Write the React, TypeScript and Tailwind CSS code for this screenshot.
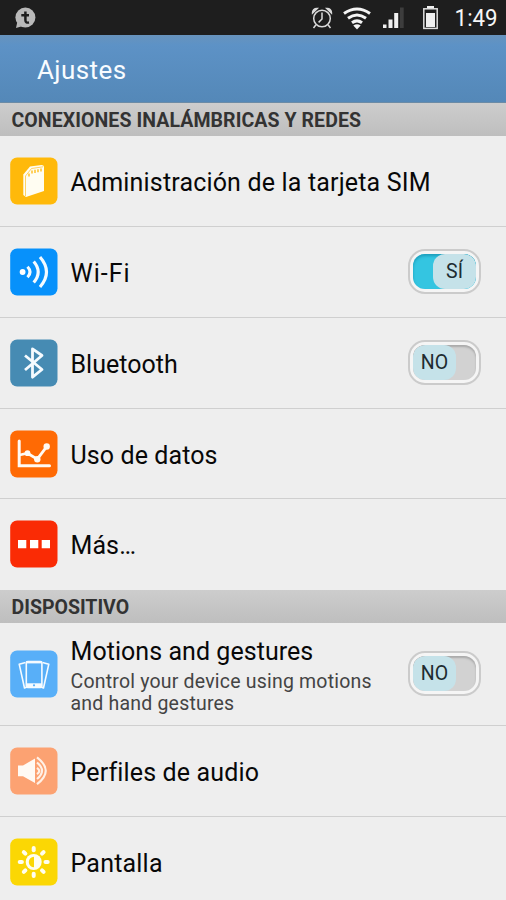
import type { ReactNode } from 'react';

function Tile({ color, children }: { color: string; children: ReactNode }) {
  return (
    <svg className={`block h-12 w-12 shrink-0 ${color}`} viewBox="0 0 48 48" fill="none">
      <rect x="0.2" y="0.4" width="47.3" height="47.2" rx="7" fill="currentColor" />
      {children}
    </svg>
  );
}

function Toggle({ on = false }: { on?: boolean }) {
  return (
    <div className="mb-[2px] h-[45px] w-[73px] shrink-0 rounded-[17px] border-2 border-[#cbcbcb] bg-[#f5f5f5] p-[3px]">
      <div
        className={`flex h-full w-full overflow-hidden rounded-[12px] ${
          on
            ? 'justify-end bg-[#34c5e1] shadow-[inset_0_2px_3px_#1c9dbb]'
            : 'justify-start bg-[#d2d2d2] shadow-[inset_0_2px_2px_#aaaaaa]'
        }`}
      >
        <div className="flex h-full w-[43px] items-center justify-center rounded-[12px] bg-[#c5e2e9] pt-[2px] text-[19.5px] leading-none text-[#202c30]">
          {on ? 'SÍ' : 'NO'}
        </div>
      </div>
    </div>
  );
}

function Section({ children }: { children: ReactNode }) {
  return (
    <h2 className="flex h-[33px] shrink-0 items-center bg-linear-to-b from-[#cdcdcd] to-[#bebebe] pt-[2px] pl-[11.5px] text-[19.5px] font-bold text-[#333333]">
      {children}
    </h2>
  );
}

function Row({
  icon,
  label,
  height = 'h-[91px] border-b',
  toggle,
}: {
  icon: ReactNode;
  label: ReactNode;
  height?: string;
  toggle?: ReactNode;
}) {
  return (
    <div className={`flex shrink-0 items-center border-[#cfcfcf] pl-[10px] pr-[25px] ${height}`}>
      {icon}
      <div className="min-w-0 flex-1 pt-[4px] pl-[12.5px] whitespace-nowrap">{label}</div>
      {toggle}
    </div>
  );
}

function Title({ className = 'tracking-[0.1px]', children }: { className?: string; children: ReactNode }) {
  return <div className={`text-[25px] leading-[30px] text-[#080808] ${className}`}>{children}</div>;
}

const rays = [0, 45, 90, 135, 180, 225, 270, 315];

export default function App() {
  return (
    <div className="flex h-[900px] w-[506px] flex-col overflow-hidden bg-[#eeeeee] font-[Roboto,sans-serif]">
      <div className="flex h-[35px] shrink-0 items-center bg-[#1e1e1e]">
        <svg className="h-[35px] w-[506px]" viewBox="0 0 506 35" fill="none">
          <path d="M16 28 L17.3 22 A10 10 0 0 0 22 26.3 Z" fill="#b9b9b9" />
          <circle cx="25.4" cy="17.5" r="10" fill="#b9b9b9" />
          <path d="M25.4 11.5 V20 Q25.4 23.2 29 22.5 M21.3 15.2 H29" stroke="#1e1e1e" strokeWidth="2.5" />
          <g stroke="#dadada" strokeWidth="1.5">
            <circle cx="322" cy="18.5" r="8.3" />
            <path d="M322 12.5 V19 L318.6 22.4 M315.8 25 L313.5 28 M328.2 25 L330.5 28" />
            <path d="M312.7 12.7 A4 4 0 0 1 317 8.6 Z M331.3 12.7 A4 4 0 0 0 327 8.6 Z" fill="#dadada" strokeWidth="1.8" />
          </g>
          <g stroke="#f4f4f4" strokeWidth="3">
            <path d="M344 13.5 Q357 4.5 370 13.5" />
            <path d="M348 18.2 Q357 11.7 366 18.2" />
            <path d="M352 22.8 Q357 19 362 22.8" />
          </g>
          <path d="M353.3 25.6 Q357 23 360.7 25.6 L357 29.6 Z" fill="#f4f4f4" />
          <g fill="#f0f0f0">
            <rect x="383" y="24.5" width="3.5" height="3.5" />
            <rect x="388.5" y="19.5" width="4" height="8.5" />
            <rect x="394.2" y="13" width="4" height="15" />
            <rect x="400" y="7.5" width="3.7" height="20.5" fill="#3d3d3d" />
            <rect x="427" y="6" width="7" height="3" />
            <rect x="426" y="13" width="9" height="14" />
          </g>
          <rect x="423.8" y="8.8" width="13.4" height="19.6" stroke="#dddddd" strokeWidth="1.5" />
          <text x="454.6" y="26" fill="#f6f6f6" className="text-[24px]" textLength="43" lengthAdjust="spacingAndGlyphs">1:49</text>
        </svg>
      </div>
      <header className="flex h-[68px] shrink-0 items-center border-b border-[#6b8ba6] bg-linear-to-b from-[#6793bd] via-[#5d92c6] via-15% to-[#5488b8] pl-[37px] pt-[4px] text-[26px] tracking-[0.4px] text-[#f8fcff]">
        Ajustes
      </header>

      <Section><span className="tracking-[0.08px]">CONEXIONES INALÁMBRICAS Y REDES</span></Section>
      <Row
        icon={
          <Tile color="text-[#ffb90a]">
            <path d="M13.3 17.5 L20 9.5 L31.5 8 Q34 8 34 10 V34 L16 40 L13.3 38 Z" fill="#fffdf2" />
            <path d="M15.5 39 V19 L21.5 11.5 L33 9.8" stroke="#ffc83f" strokeWidth="0.8" />
            <path d="M19 19.5 V16.5 M22 16.5 V13.5 M25 16 V12.8 M28 15.3 V12.2 M31 14.5 V11.5" stroke="#ffb90a" strokeWidth="1.3" />
          </Tile>
        }
        label={<Title className="tracking-[0.17px]">Administración de la tarjeta SIM</Title>}
      />
      <Row
        icon={
          <Tile color="text-[#0791fb]">
            <circle cx="12.6" cy="24" r="2.9" fill="#fff" />
            <path d="M17.5 18.8 Q22.5 24 17.5 29.2 M23.7 13.5 Q32.7 24 23.7 34.5 M30 9 Q43 24 30 39" stroke="#f4fbff" strokeWidth="3.1" />
          </Tile>
        }
        label={<Title className="tracking-[1px]">Wi-Fi</Title>}
        toggle={<Toggle on />}
      />
      <Row
        icon={
          <Tile color="text-[#468bb3]">
            <path d="M15 16.5 L32 30.5 L22.5 38.2 V9.8 L32 16.5 L15 31" stroke="#f5fbff" strokeWidth="2.8" strokeLinejoin="round" />
          </Tile>
        }
        label={<Title className="tracking-[0.03px]">Bluetooth</Title>}
        toggle={<Toggle />}
      />
      <Row
        height="h-[90px] border-b"
        icon={
          <Tile color="text-[#ff6a04]">
            <path d="M9.2 11 V35.7 H39.5" stroke="#fffaf4" strokeWidth="3" strokeLinecap="round" />
            <path d="M9.5 25 L17.5 23.2 L27.3 29.2 L36.7 16.7" stroke="#fffaf4" strokeWidth="2.8" />
            <g fill="#fffaf4">
              <circle cx="17.5" cy="23.2" r="2.9" />
              <circle cx="27.3" cy="29.2" r="3.2" />
              <circle cx="36.7" cy="16.5" r="3.2" />
            </g>
          </Tile>
        }
        label={<Title>Uso de datos</Title>}
      />
      <Row
        height="h-[91px] pb-[2px]"
        icon={
          <Tile color="text-[#fa2b05]">
            <path d="M8 20h8.3v8.3H8zM20 20h8.3v8.3H20zM31.7 20H40v8.3h-8.3z" fill="#fff" />
          </Tile>
        }
        label={<Title>Más…</Title>}
      />

      <Section>DISPOSITIVO</Section>
      <Row
        height="h-[103px] border-b"
        icon={
          <Tile color="text-[#58aff8]">
            <g stroke="#f5fbff" strokeWidth="1.6" strokeLinejoin="round">
              <path d="M15.5 12.5 L9.2 14.2 L14.5 38 L17 37 M32.5 12.5 L38.8 14.2 L33.5 38 L31 37" />
              <rect x="16.3" y="11.5" width="15.6" height="26" rx="1.5" fill="#58aff8" />
            </g>
            <rect x="16" y="33.3" width="16" height="4.5" fill="#f5fbff" />
            <circle cx="24" cy="35.3" r="1.1" fill="#58aff8" />
            <path d="M16 12.3 H32" stroke="#f5fbff" strokeWidth="2.2" />
          </Tile>
        }
        label={
          <>
            <Title className="mb-[4px] tracking-[0.05px]">Motions and gestures</Title>
            <p className="text-[19.5px] leading-[22.5px] tracking-[0.2px] text-[#444444]">
              Control your device using motions
              <br />
              and hand gestures
            </p>
          </>
        }
        toggle={<Toggle />}
      />
      <Row
        icon={
          <Tile color="text-[#fca272]">
            <path d="M8 18.5 H13 L25 11.5 V36 L13 29.3 H8 Z" fill="#fffaf4" />
            <path d="M27 20.8 Q31.5 24 27 27.2 M27 15.5 Q37 23.8 27 32 M27 10.3 Q44.5 23.8 27 37.2" stroke="#fff1e6" strokeWidth="2.2" />
          </Tile>
        }
        label={<Title className="tracking-[0.15px]">Perfiles de audio</Title>}
      />
      <Row
        height="h-[91px] border-b pb-px"
        icon={
          <Tile color="text-[#fbd704]">
            <circle cx="23.7" cy="24" r="8" fill="#fffef0" />
            <path d="M24 18.8 A5.2 5.2 0 0 0 24 29.2 Z" fill="#fbd704" />
            {rays.map((angle) => (
              <path key={angle} d="M23.7 12.2 V10" stroke="#fffef0" strokeWidth="4" strokeLinecap="round" transform={`rotate(${angle} 23.7 24)`} />
            ))}
          </Tile>
        }
        label={<Title className="tracking-[0.2px]">Pantalla</Title>}
      />
    </div>
  );
}
